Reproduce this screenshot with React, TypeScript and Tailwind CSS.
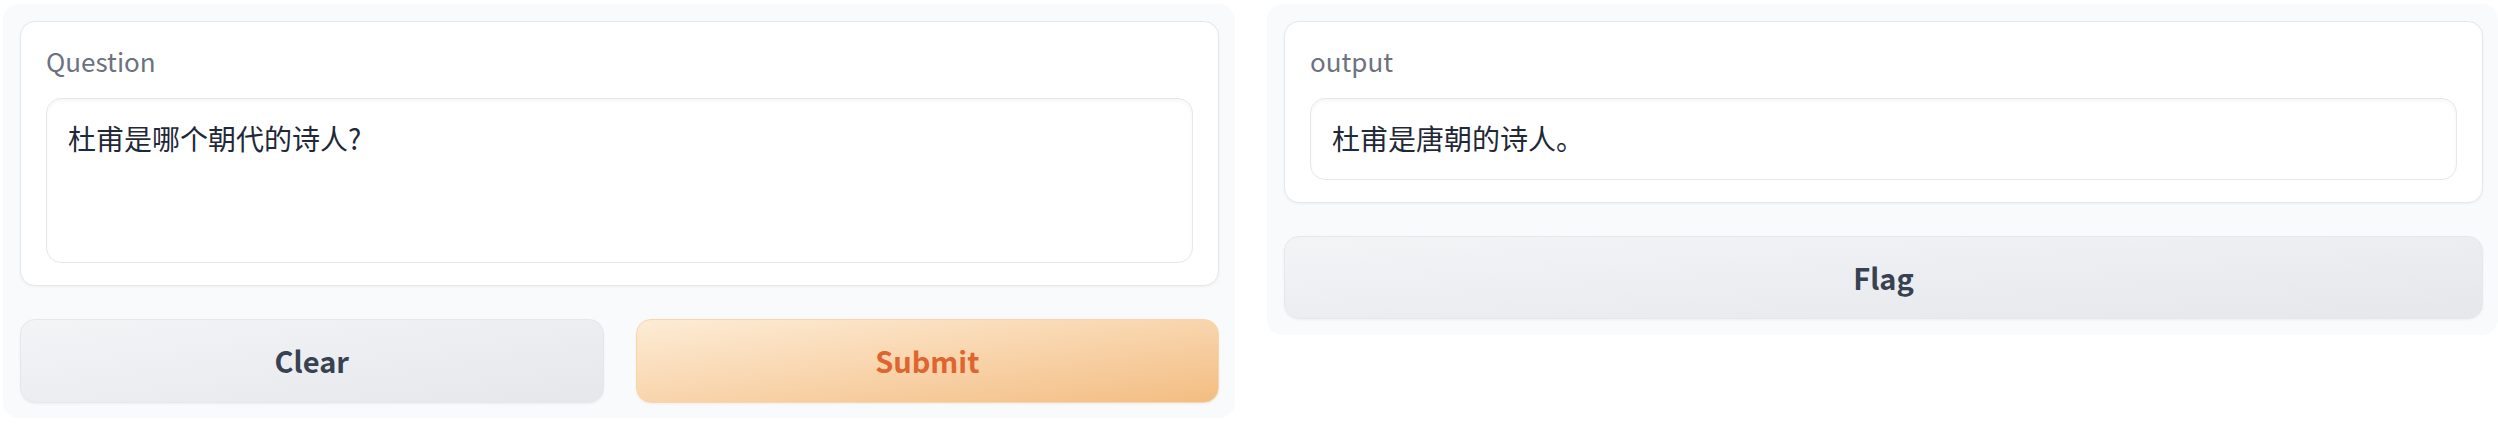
import React from "react";

const font = { fontFamily: '"Noto Sans CJK SC", "Noto Sans", sans-serif' };

function Card({ label, text, h }: { label: string; text: string; h: string }) {
  return (
    <div className="rounded-[15px] border border-[#e5e7eb] bg-white shadow-[0_1px_3px_rgba(0,0,0,0.05)] px-[25px] pt-[21px] pb-[22px]">
      <div className="text-[26px] leading-[36px] text-[#6b7280] mb-[19px]">{label}</div>
      <div
        className={`${h} rounded-[15px] border border-[#e5e7eb] bg-white shadow-[inset_0_2px_4px_rgba(0,0,0,0.04)] px-[21px] pt-[18px] text-[28px] leading-[42px] text-[#1f2937]`}
      >
        {text}
      </div>
    </div>
  );
}

function SecondaryButton({ children, h }: { children: React.ReactNode; h: string }) {
  return (
    <button
      className={`${h} flex-1 flex items-center justify-center rounded-[15px] border border-[#e5e7eb] bg-gradient-to-br from-[#f3f4f6] to-[#e5e7eb] shadow-[0_1px_3px_rgba(0,0,0,0.05)] text-[29px] font-semibold text-[#374151]`}
    >
      {children}
    </button>
  );
}

export default function App() {
  return (
    <div className="w-[2498px] h-[446px] bg-white" style={font}>
      <div className="flex items-start gap-[32px] pl-[3px] pt-[4px]">
        <div className="flex-1 rounded-[16px] bg-[#f9fafb] pl-[17px] pr-[16px] pt-[17px] pb-[15px] flex flex-col gap-[33px]">
          <Card label="Question" text="杜甫是哪个朝代的诗人?" h="h-[165px]" />
          <div className="flex gap-[32px]">
            <SecondaryButton h="h-[84px]">Clear</SecondaryButton>
            <button className="h-[84px] flex-1 flex items-center justify-center rounded-[15px] border border-[#fbd5a8] bg-gradient-to-br from-[#fdecd6] to-[#f3bd82] shadow-[0_1px_3px_rgba(0,0,0,0.05)] text-[29px] font-semibold text-[#df6530]">
              Submit
            </button>
          </div>
        </div>
        <div className="flex-1 rounded-[16px] bg-[#f9fafb] pl-[17px] pr-[15px] pt-[17px] pb-[16px] flex flex-col gap-[33px]">
          <Card label="output" text="杜甫是唐朝的诗人。" h="h-[82px]" />
          <div className="flex">
            <SecondaryButton h="h-[83px]">Flag</SecondaryButton>
          </div>
        </div>
      </div>
    </div>
  );
}
